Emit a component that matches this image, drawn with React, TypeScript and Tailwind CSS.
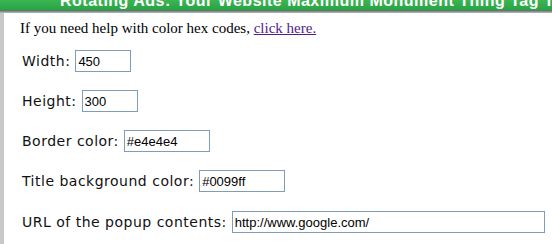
import React from "react";

const Row = ({ label, value, w, mt }: { label: string; value: string; w: string; mt: string }) => (
  <div className={`flex items-center h-[22px] ${mt}`}>
    <span className="text-[14px] tracking-[0.5px] text-[#111] leading-none" style={{ fontFamily: '"DejaVu Sans", Verdana, sans-serif' }}>
      {label}
    </span>
    <input
      readOnly
      value={value}
      className={`ml-[5px] h-[22px] ${w} border border-[#7f9db9] bg-white px-[2px] text-[13px] text-black outline-none`}
      style={{ fontFamily: '"Liberation Sans", Arial, sans-serif' }}
    />
  </div>
);

export default function App() {
  return (
    <div className="w-[552px] h-[244px] bg-white overflow-hidden">
      <div className="relative h-[10px] overflow-hidden bg-gradient-to-b from-[#3cb552] to-[#27a244]">
        <div
          className="absolute left-[60px] top-[-11px] whitespace-nowrap text-[16px] font-bold text-white tracking-[0.5px]"
          style={{ fontFamily: '"Liberation Sans", Arial, sans-serif' }}
        >
          Rotating Ads: Your Website Maximum Monument Thing Tag To Ease
        </div>
      </div>
      <div className="h-[3px] bg-gradient-to-b from-[#4f6b55] to-[#b9bcc0]" />
      <div className="flex h-[231px]">
        <div className="w-[4px] bg-[#c8c8c8]" />
        <div className="flex-1 pl-[16px]">
          <p
            className="mt-[6px] text-[15px] leading-[18px] text-black"
            style={{ fontFamily: '"Liberation Serif", "Times New Roman", serif' }}
          >
            If you need help with color hex codes,{" "}
            <a href="#" className="text-[#551a8b] underline">
              click here.
            </a>
          </p>
          <div className="pl-[2px]">
            <Row label="Width:" value="450" w="w-[56px]" mt="mt-[13px]" />
            <Row label="Height:" value="300" w="w-[56px]" mt="mt-[18px]" />
            <Row label="Border color:" value="#e4e4e4" w="w-[86px]" mt="mt-[18px]" />
            <Row label="Title background color:" value="#0099ff" w="w-[86px]" mt="mt-[18px]" />
            <Row label="URL of the popup contents:" value="http://www.google.com/" w="w-[313px]" mt="mt-[19px]" />
          </div>
        </div>
      </div>
    </div>
  );
}
